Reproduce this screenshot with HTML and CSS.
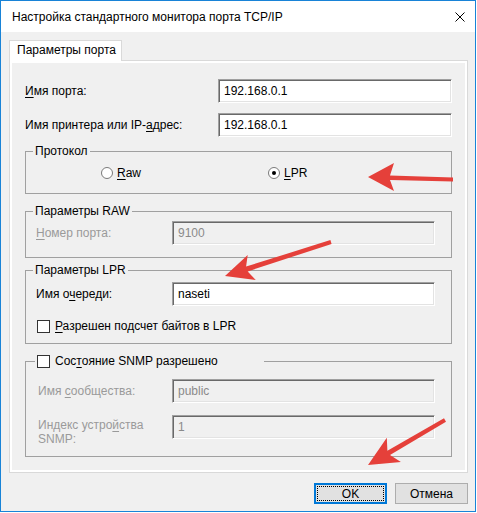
FILE: index.html
```html
<!DOCTYPE html>
<html lang="ru">
<head>
  <meta charset="UTF-8">
  <title>Настройка стандартного монитора порта TCP/IP</title>
  <link rel="stylesheet" href="styles.css">
</head>
<body>
  <div class="window">
    <div class="titlebar">
      <span class="title">Настройка стандартного монитора порта TCP/IP</span>
      <svg class="close" width="10" height="10" viewBox="0 0 10 10">
        <path d="M0.5 0.5 L9.5 9.5 M9.5 0.5 L0.5 9.5" stroke="#000" stroke-width="1" fill="none"/>
      </svg>
    </div>

    <div class="client">
      <div class="tab">Параметры порта</div>

      <div class="panel">
        <div class="row">
          <label><u>И</u>мя порта:</label>
          <div class="edit">192.168.0.1</div>
        </div>
        <div class="row">
          <label>Имя принтера или IP-<u>а</u>дрес:</label>
          <div class="edit">192.168.0.1</div>
        </div>

        <fieldset class="group group-protocol">
          <legend>Протокол</legend>
          <div class="radios">
            <div class="radio"><span class="dot"></span><span><u>R</u>aw</span></div>
            <div class="radio"><span class="dot checked"></span><span><u>L</u>PR</span></div>
          </div>
        </fieldset>

        <fieldset class="group group-raw">
          <legend>Параметры RAW</legend>
          <div class="field disabled">
            <label><u>Н</u>омер порта:</label>
            <div class="edit">9100</div>
          </div>
        </fieldset>

        <fieldset class="group group-lpr">
          <legend>Параметры LPR</legend>
          <div class="field">
            <label>Имя о<u>ч</u>ереди:</label>
            <div class="edit">naseti</div>
          </div>
          <div class="check check-bytes"><span class="box"></span><span><u>Р</u>азрешен подсчет байтов в LPR</span></div>
        </fieldset>

        <fieldset class="group group-snmp">
          <legend class="check"><span class="box"></span><span>Сос<u>т</u>ояние SNMP разрешено</span></legend>
          <div class="field disabled">
            <label>Имя <u>с</u>ообщества:</label>
            <div class="edit">public</div>
          </div>
          <div class="field disabled field-index">
            <label>Индекс устро<u>й</u>ства<br>SNMP:</label>
            <div class="edit">1</div>
          </div>
        </fieldset>
      </div>

      <div class="buttons">
        <button class="btn btn-default">OK</button>
        <button class="btn">Отмена</button>
      </div>
    </div>
  </div>

  <svg class="marks" width="477" height="513" viewBox="0 0 477 513">
    <polygon points="368,177 394,163 390,175.5 453,177.5 453,181.5 390,180 394,191" fill="#e5403a"/>
    <polygon points="225,276 247.7,255.1 246.1,266.6 330.4,240.1 331.6,243.9 247.7,271.4 255.7,279.9" fill="#e5403a"/>
    <polygon points="368,465 386.8,437.8 387.4,450.7 444,418.3 446,421.7 390,455 400.9,462" fill="#e5403a"/>
  </svg>
</body>
</html>
```

FILE: styles.css
```css
* {
  box-sizing: border-box;
  margin: 0;
  padding: 0;
}

body {
  background: #fff;
  font-family: 'Liberation Sans', Arial, sans-serif;
  font-size: 12px;
  color: #000;
  position: relative;
}

u {
  text-decoration-thickness: 1px;
  text-underline-offset: 2px;
}

.window {
  width: 476px;
  height: 512px;
  border: 1px solid #1883d7;
  background: #f0f0f0;
  display: flex;
  flex-direction: column;
}

.titlebar {
  height: 31px;
  background: #fff;
  display: flex;
  align-items: center;
  justify-content: space-between;
  padding: 0 10px 0 11px;
}

.client {
  flex: 1;
  padding: 8px 0 0 8px;
}

.tab {
  width: fit-content;
  height: 21px;
  border: 1px solid #d9d9d9;
  border-bottom: none;
  background: #fff;
  padding: 0 5px 0 7px;
  line-height: 19px;
  white-space: nowrap;
  position: relative;
  z-index: 1;
  margin-bottom: -1px;
}

.panel {
  width: 459px;
  border: 1px solid #d9d9d9;
  box-shadow: inset 0 0 0 2px #fff;
  padding: 18px 14px 15px 15px;
}

.row {
  display: grid;
  grid-template-columns: 193px 234px;
  align-items: center;
}

.row + .row {
  margin-top: 10px;
}

/* sunken edit box */
.edit {
  height: 24px;
  border: 1px solid;
  border-color: #a0a0a0 #fff #fff #a0a0a0;
  box-shadow: inset 1px 1px 0 #696969, inset -1px -1px 0 #e3e3e3;
  background: #fff;
  padding-left: 5px;
  line-height: 22px;
  white-space: nowrap;
}

.group {
  width: 427px;
  border: 1px solid #a0a0a0;
  padding: 0 16px 12px 10px;
  min-width: 0;
}

.group legend {
  margin-left: -3px;
  padding: 0 2px;
  line-height: 16px;
}

.group-protocol {
  margin-top: 6px;
}

.group-raw {
  margin-top: 9px;
}

.group-lpr {
  margin-top: 4px;
  padding-bottom: 9px;
}

.group-snmp {
  margin-top: 9px;
  padding-bottom: 17px;
}

.radios {
  display: flex;
  padding: 6px 0 0 65px;
  line-height: 16px;
}

.radio {
  width: 219px;
  display: flex;
  align-items: center;
  gap: 4px;
}

.dot {
  width: 12px;
  height: 12px;
  border: 1px solid #7a7a7a;
  border-radius: 50%;
  background: #fff;
  display: flex;
  align-items: center;
  justify-content: center;
}

.dot.checked::after {
  content: "";
  width: 4px;
  height: 4px;
  border-radius: 50%;
  background: #000;
}

.field {
  display: grid;
  grid-template-columns: 136px 263px;
  align-items: center;
}

.group-raw .field {
  padding-top: 2px;
}

.group-lpr .field {
  padding-top: 4px;
}

.group-snmp .field {
  padding-top: 10px;
}

.group-snmp .field + .field {
  padding-top: 12px;
}

.group-snmp label {
  padding-left: 2px;
}

.field.disabled label {
  color: #9a9a9a;
}

.field.disabled .edit {
  background: #f0f0f0;
  color: #8a8a8a;
}

.field-index {
  align-items: start;
}

.field-index label {
  height: 24px;
  line-height: 14px;
  padding-top: 3px;
}

.check {
  display: flex;
  align-items: center;
  gap: 5px;
  line-height: 16px;
}

.check-bytes {
  margin-top: 12px;
  padding-left: 1px;
}

.group-snmp legend.check {
  width: 229px;
  margin-left: -1px;
  padding: 0 0 0 2px;
}

.box {
  width: 13px;
  height: 13px;
  border: 1px solid #333;
  background: #fff;
  flex: none;
}

.buttons {
  width: 459px;
  display: flex;
  justify-content: flex-end;
  gap: 8px;
  margin-top: 10px;
}

.btn {
  width: 73px;
  height: 21px;
  border: 1px solid #adadad;
  background: #e1e1e1;
  font-family: inherit;
  font-size: 12px;
  color: #000;
}

.btn-default {
  border-color: #0078d7;
  box-shadow: inset 0 0 0 1px #0078d7;
  outline: 1px dotted #000;
  outline-offset: -4px;
}

.marks {
  position: absolute;
  top: 0;
  left: 0;
  pointer-events: none;
}
```
